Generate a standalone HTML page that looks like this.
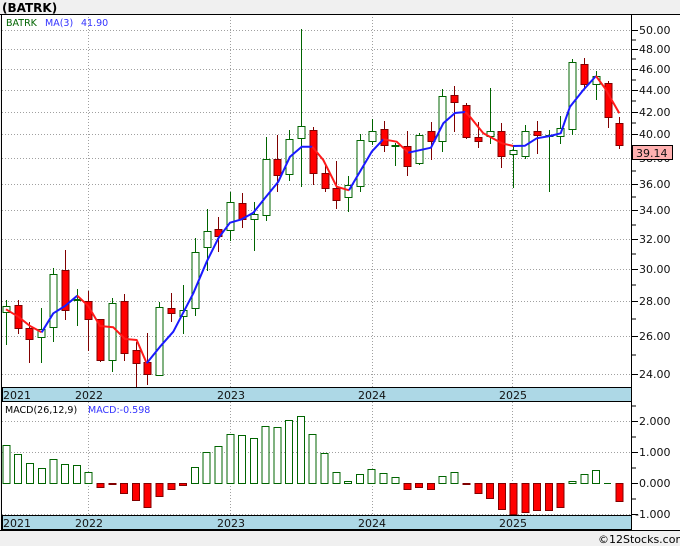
<!DOCTYPE html>
<html><head><meta charset="utf-8"><style>
html,body{margin:0;padding:0;background:#f0f0f0;}
svg{display:block;font-family:"DejaVu Sans","Liberation Sans",sans-serif;}
</style></head><body>
<svg width="680" height="546" viewBox="0 0 680 546" xmlns="http://www.w3.org/2000/svg">
<rect x="0" y="0" width="680" height="546" fill="#f0f0f0"/>
<rect x="2" y="14" width="678" height="516" fill="#fff"/>
<text x="2" y="12" font-size="12" font-weight="bold" fill="#000">(BATRK)</text>
<!-- grid -->
<g stroke="#a0a0a0" stroke-width="1" stroke-dasharray="1,2">
<line x1="2" x2="632" y1="30.5" y2="30.5"/><line x1="2" x2="632" y1="49.5" y2="49.5"/>
<line x1="2" x2="632" y1="69.5" y2="69.5"/><line x1="2" x2="632" y1="90.5" y2="90.5"/>
<line x1="2" x2="632" y1="112.5" y2="112.5"/><line x1="2" x2="632" y1="134.5" y2="134.5"/>
<line x1="2" x2="632" y1="158.5" y2="158.5"/><line x1="2" x2="632" y1="184.5" y2="184.5"/>
<line x1="2" x2="632" y1="210.5" y2="210.5"/><line x1="2" x2="632" y1="239.5" y2="239.5"/>
<line x1="2" x2="632" y1="269.5" y2="269.5"/><line x1="2" x2="632" y1="301.5" y2="301.5"/>
<line x1="2" x2="632" y1="336.5" y2="336.5"/><line x1="2" x2="632" y1="374.5" y2="374.5"/>
<line x1="88.5" x2="88.5" y1="14" y2="387"/><line x1="230.5" x2="230.5" y1="14" y2="387"/>
<line x1="372.5" x2="372.5" y1="14" y2="387"/><line x1="512.5" x2="512.5" y1="14" y2="387"/>
<line x1="2" x2="632" y1="421.5" y2="421.5"/><line x1="2" x2="632" y1="452.5" y2="452.5"/>
<line x1="2" x2="632" y1="514.5" y2="514.5"/>
<line x1="88.5" x2="88.5" y1="402" y2="515"/><line x1="230.5" x2="230.5" y1="402" y2="515"/>
<line x1="372.5" x2="372.5" y1="402" y2="515"/><line x1="512.5" x2="512.5" y1="402" y2="515"/>
</g>
<!-- right axis ticks -->
<g stroke="#000" stroke-width="1">
<line x1="632" x2="638" y1="30.5" y2="30.5"/><line x1="632" x2="638" y1="49.5" y2="49.5"/>
<line x1="632" x2="638" y1="69.5" y2="69.5"/><line x1="632" x2="638" y1="90.5" y2="90.5"/>
<line x1="632" x2="638" y1="112.5" y2="112.5"/><line x1="632" x2="638" y1="134.5" y2="134.5"/>
<line x1="632" x2="638" y1="158.5" y2="158.5"/><line x1="632" x2="638" y1="184.5" y2="184.5"/>
<line x1="632" x2="638" y1="210.5" y2="210.5"/><line x1="632" x2="638" y1="239.5" y2="239.5"/>
<line x1="632" x2="638" y1="269.5" y2="269.5"/><line x1="632" x2="638" y1="301.5" y2="301.5"/>
<line x1="632" x2="638" y1="336.5" y2="336.5"/><line x1="632" x2="638" y1="374.5" y2="374.5"/>
<line x1="632" x2="636" y1="40" y2="40"/><line x1="632" x2="636" y1="59" y2="59"/>
<line x1="632" x2="636" y1="80" y2="80"/><line x1="632" x2="636" y1="101" y2="101"/>
<line x1="632" x2="636" y1="123" y2="123"/><line x1="632" x2="636" y1="146" y2="146"/>
<line x1="632" x2="636" y1="171" y2="171"/><line x1="632" x2="636" y1="197" y2="197"/>
<line x1="632" x2="636" y1="225" y2="225"/><line x1="632" x2="636" y1="254" y2="254"/>
<line x1="632" x2="636" y1="285" y2="285"/><line x1="632" x2="636" y1="319" y2="319"/>
<line x1="632" x2="636" y1="355" y2="355"/>
<line x1="632" x2="638" y1="421.5" y2="421.5"/><line x1="632" x2="638" y1="452.5" y2="452.5"/>
<line x1="632" x2="638" y1="483.5" y2="483.5"/><line x1="632" x2="638" y1="514.5" y2="514.5"/>
<line x1="632" x2="636" y1="406" y2="406"/><line x1="632" x2="636" y1="437" y2="437"/>
<line x1="632" x2="636" y1="468" y2="468"/><line x1="632" x2="636" y1="499" y2="499"/>
</g>
<g font-size="11" fill="#111">
<text x="639" y="34">50.00</text><text x="639" y="53">48.00</text>
<text x="639" y="73">46.00</text><text x="639" y="94">44.00</text>
<text x="639" y="116">42.00</text><text x="639" y="138">40.00</text>
<text x="639" y="162">38.00</text><text x="639" y="188">36.00</text>
<text x="639" y="214">34.00</text><text x="639" y="243">32.00</text>
<text x="639" y="273">30.00</text><text x="639" y="305">28.00</text>
<text x="639" y="340">26.00</text><text x="639" y="378">24.00</text>
<text x="639" y="425">2.000</text><text x="639" y="456">1.000</text>
<text x="639" y="487">0.000</text><text x="635" y="518">-1.000</text>
</g>
<rect x="632.5" y="145.5" width="40" height="14" fill="#ffb0b0" stroke="#000"/>
<text x="636" y="157" font-size="11" fill="#111">39.14</text>
<!-- candles -->
<g stroke-width="1">
<g stroke="#006400" fill="#fff">
<line x1="6.5" x2="6.5" y1="300" y2="345"/><rect x="3" y="306.5" width="7" height="6"/>
<line x1="41.5" x2="41.5" y1="308" y2="363"/><rect x="38" y="329.5" width="7" height="8"/>
<line x1="53.5" x2="53.5" y1="268" y2="342"/><rect x="50" y="274.5" width="7" height="53"/>
<line x1="77.5" x2="77.5" y1="289" y2="326"/><rect x="74" y="299.5" width="7" height="1"/>
<line x1="112.5" x2="112.5" y1="298" y2="372"/><rect x="109" y="303.5" width="7" height="57"/>
<line x1="159.5" x2="159.5" y1="302" y2="376"/><rect x="156" y="307.5" width="7" height="68"/>
<line x1="183.5" x2="183.5" y1="285" y2="334"/><rect x="180" y="310.5" width="7" height="6"/>
<line x1="195.5" x2="195.5" y1="238" y2="316"/><rect x="192" y="252.5" width="7" height="56"/>
<line x1="207.5" x2="207.5" y1="209" y2="271"/><rect x="204" y="231.5" width="7" height="16"/>
<line x1="230.5" x2="230.5" y1="192" y2="241"/><rect x="227" y="202.5" width="7" height="28"/>
<line x1="254.5" x2="254.5" y1="202" y2="251"/><rect x="251" y="214.5" width="7" height="5"/>
<line x1="266.5" x2="266.5" y1="137" y2="221"/><rect x="263" y="159.5" width="7" height="56"/>
<line x1="289.5" x2="289.5" y1="130" y2="181"/><rect x="286" y="139.5" width="7" height="35"/>
<line x1="301.5" x2="301.5" y1="29" y2="187"/><rect x="298" y="126.5" width="7" height="12"/>
<line x1="348.5" x2="348.5" y1="176" y2="212"/><rect x="345" y="185.5" width="7" height="12"/>
<line x1="360.5" x2="360.5" y1="134" y2="192"/><rect x="357" y="140.5" width="7" height="46"/>
<line x1="372.5" x2="372.5" y1="119" y2="145"/><rect x="369" y="131.5" width="7" height="10"/>
<line x1="395.5" x2="395.5" y1="143" y2="166"/><rect x="392" y="145.5" width="7" height="1"/>
<line x1="419.5" x2="419.5" y1="133" y2="165"/><rect x="416" y="135.5" width="7" height="28"/>
<line x1="442.5" x2="442.5" y1="89" y2="152"/><rect x="439" y="96.5" width="7" height="45"/>
<line x1="490.5" x2="490.5" y1="88" y2="144"/><rect x="487" y="131.5" width="7" height="5"/>
<line x1="513.5" x2="513.5" y1="145" y2="188"/><rect x="510" y="150.5" width="7" height="4"/>
<line x1="525.5" x2="525.5" y1="125" y2="159"/><rect x="522" y="131.5" width="7" height="25"/>
<line x1="549.5" x2="549.5" y1="130" y2="192"/><rect x="546" y="135.5" width="7" height="1"/>
<line x1="560.5" x2="560.5" y1="116" y2="144"/><rect x="557" y="128.5" width="7" height="8"/>
<line x1="572.5" x2="572.5" y1="59" y2="135"/><rect x="569" y="62.5" width="7" height="67"/>
<line x1="596.5" x2="596.5" y1="71" y2="100"/><rect x="593" y="76.5" width="7" height="8"/>
</g>
<g stroke="#800000" fill="#ff0000">
<line x1="18.5" x2="18.5" y1="300" y2="334"/><rect x="15" y="305.5" width="7" height="23"/>
<line x1="29.5" x2="29.5" y1="322" y2="363"/><rect x="26" y="328.5" width="7" height="11"/>
<line x1="65.5" x2="65.5" y1="250" y2="320"/><rect x="62" y="270.5" width="7" height="40"/>
<line x1="88.5" x2="88.5" y1="291" y2="351"/><rect x="85" y="301.5" width="7" height="18"/>
<line x1="100.5" x2="100.5" y1="319" y2="362"/><rect x="97" y="319.5" width="7" height="41"/>
<line x1="124.5" x2="124.5" y1="294" y2="361"/><rect x="121" y="301.5" width="7" height="52"/>
<line x1="136.5" x2="136.5" y1="342" y2="387"/><rect x="133" y="350.5" width="7" height="13"/>
<line x1="147.5" x2="147.5" y1="333" y2="385"/><rect x="144" y="362.5" width="7" height="12"/>
<line x1="171.5" x2="171.5" y1="293" y2="322"/><rect x="168" y="308.5" width="7" height="5"/>
<line x1="218.5" x2="218.5" y1="217" y2="252"/><rect x="215" y="229.5" width="7" height="7"/>
<line x1="242.5" x2="242.5" y1="193" y2="228"/><rect x="239" y="203.5" width="7" height="16"/>
<line x1="277.5" x2="277.5" y1="135" y2="192"/><rect x="274" y="159.5" width="7" height="16"/>
<line x1="313.5" x2="313.5" y1="127" y2="185"/><rect x="310" y="130.5" width="7" height="43"/>
<line x1="325.5" x2="325.5" y1="165" y2="192"/><rect x="322" y="173.5" width="7" height="15"/>
<line x1="336.5" x2="336.5" y1="161" y2="209"/><rect x="333" y="188.5" width="7" height="12"/>
<line x1="384.5" x2="384.5" y1="121" y2="152"/><rect x="381" y="129.5" width="7" height="16"/>
<line x1="407.5" x2="407.5" y1="131" y2="176"/><rect x="404" y="146.5" width="7" height="20"/>
<line x1="431.5" x2="431.5" y1="122" y2="160"/><rect x="428" y="131.5" width="7" height="10"/>
<line x1="454.5" x2="454.5" y1="86" y2="132"/><rect x="451" y="95.5" width="7" height="7"/>
<line x1="466.5" x2="466.5" y1="103" y2="139"/><rect x="463" y="105.5" width="7" height="32"/>
<line x1="478.5" x2="478.5" y1="122" y2="148"/><rect x="475" y="137.5" width="7" height="4"/>
<line x1="501.5" x2="501.5" y1="123" y2="168"/><rect x="498" y="131.5" width="7" height="25"/>
<line x1="537.5" x2="537.5" y1="121" y2="154"/><rect x="534" y="131.5" width="7" height="4"/>
<line x1="584.5" x2="584.5" y1="58" y2="88"/><rect x="581" y="64.5" width="7" height="20"/>
<line x1="608.5" x2="608.5" y1="81" y2="128"/><rect x="605" y="83.5" width="7" height="34"/>
<line x1="619.5" x2="619.5" y1="117" y2="149"/><rect x="616" y="123.5" width="7" height="22"/>
</g>
</g>
<!-- MA line -->
<g fill="none" stroke-width="2" stroke-linejoin="round">
<polyline stroke="#ff1a1a" points="6,309.3 18.3,316.7 30,326 41.7,332.3"/>
<polyline stroke="#1a1aff" points="41.7,332.3 53.3,313.3 65,306 77.3,295.7"/>
<polyline stroke="#ff1a1a" points="77.3,295.7 88.3,306 100,326 113.3,327.3 125,339 136.7,340 146.7,363.3"/>
<polyline stroke="#1a1aff" points="146.7,363.3 160,346.7 173.3,331.7 193.3,293.3 206.7,261.7 218.3,238.3 230,222.7 241.7,219.3 253.3,212.7 265,198 278.3,181.7 290,156.7 301.7,146.7 312.3,146.7"/>
<polyline stroke="#ff1a1a" points="312.3,146.7 323.3,160 336.7,186.7 349,190.3"/>
<polyline stroke="#1a1aff" points="349,190.3 371.7,151.7 383.3,139.3"/>
<polyline stroke="#ff1a1a" points="383.3,139.3 396.7,141.7 408.3,152.7"/>
<polyline stroke="#1a1aff" points="408.3,152.7 431,147.7 443.3,123.3 455,113 465.3,112"/>
<polyline stroke="#ff1a1a" points="465.3,112 471,118 483.3,133.3 502,143.3 513.3,146"/>
<polyline stroke="#1a1aff" points="513.3,146 525,145.7 536.7,138.3 550,136 560.7,133.3 570,106.7 583.3,90 596,76"/>
<polyline stroke="#ff1a1a" points="596,76 605,88.3 619.3,113.3"/>
</g>
<text x="6" y="26" font-size="9.5" fill="#006400">BATRK</text>
<text x="45" y="26" font-size="9.5" fill="#3333ff">MA(3)</text>
<text x="81" y="26" font-size="9.5" fill="#3333ff">41.90</text>
<!-- MACD bars -->
<g stroke="#006400" fill="#fff">
<rect x="3" y="445.5" width="7" height="38"/><rect x="14.5" y="454.5" width="7" height="29"/>
<rect x="26.5" y="463.5" width="7" height="20"/><rect x="38.5" y="468.5" width="7" height="15"/>
<rect x="50" y="459.5" width="7" height="24"/><rect x="61.5" y="464.5" width="7" height="19"/>
<rect x="73.5" y="465.5" width="7" height="18"/><rect x="85" y="472.5" width="7" height="11"/>
<rect x="191.5" y="467.5" width="7" height="16"/><rect x="203" y="452.5" width="7" height="31"/>
<rect x="215" y="446.5" width="7" height="37"/><rect x="227" y="434.5" width="7" height="49"/>
<rect x="238.5" y="435.5" width="7" height="48"/><rect x="250.5" y="438.5" width="7" height="45"/>
<rect x="262" y="426.5" width="7" height="57"/><rect x="274" y="427.5" width="7" height="56"/>
<rect x="285.5" y="420.5" width="7" height="63"/><rect x="297.5" y="416.5" width="7" height="67"/>
<rect x="309" y="434.5" width="7" height="49"/><rect x="321" y="453.5" width="7" height="30"/>
<rect x="333" y="472.5" width="7" height="11"/><rect x="344.5" y="481.5" width="7" height="2"/>
<rect x="356.5" y="474.5" width="7" height="9"/><rect x="368" y="469.5" width="7" height="14"/>
<rect x="380" y="473.5" width="7" height="10"/><rect x="392" y="477.5" width="7" height="6"/>
<rect x="439" y="476.5" width="7" height="7"/><rect x="451" y="472.5" width="7" height="11"/>
<rect x="569" y="481.5" width="7" height="2"/><rect x="581" y="474.5" width="7" height="9"/>
<rect x="592.5" y="470.5" width="7" height="13"/>
</g>
<line x1="604" x2="611" y1="483.5" y2="483.5" stroke="#006400"/>
<g stroke="#800000" fill="#ff0000">
<rect x="97" y="483.5" width="7" height="4"/><rect x="109" y="483.5" width="7" height="1"/>
<rect x="120.5" y="483.5" width="7" height="10"/><rect x="132.5" y="483.5" width="7" height="17"/>
<rect x="144" y="483.5" width="7" height="24"/><rect x="156" y="483.5" width="7" height="13"/>
<rect x="168" y="483.5" width="7" height="6"/><rect x="179.5" y="483.5" width="7" height="2"/>
<rect x="404" y="483.5" width="7" height="6"/><rect x="415.5" y="483.5" width="7" height="4"/>
<rect x="427.5" y="483.5" width="7" height="6"/><rect x="463" y="483.5" width="7" height="1"/>
<rect x="475" y="483.5" width="7" height="10"/><rect x="486.5" y="483.5" width="7" height="15"/>
<rect x="498.5" y="483.5" width="7" height="26"/><rect x="510" y="483.5" width="7" height="31"/>
<rect x="522" y="483.5" width="7" height="29"/><rect x="533.5" y="483.5" width="7" height="27"/>
<rect x="545.5" y="483.5" width="7" height="27"/><rect x="557" y="483.5" width="7" height="24"/>
<rect x="616" y="483.5" width="7" height="18"/>
</g>
<text x="5" y="413" font-size="9.5" fill="#000">MACD(26,12,9)</text>
<text x="88" y="413" font-size="9.5" fill="#3333ff">MACD:-0.598</text>
<!-- date strips -->
<rect x="2.5" y="387.5" width="629" height="14" fill="#add8e6" stroke="#000"/>
<rect x="2.5" y="515.5" width="629" height="14" fill="#add8e6" stroke="#000"/>
<g font-size="11" fill="#111">
<text x="3" y="399">2021</text><text x="75" y="399">2022</text><text x="217" y="399">2023</text><text x="358" y="399">2024</text><text x="499" y="399">2025</text>
<text x="3" y="527">2021</text><text x="75" y="527">2022</text><text x="217" y="527">2023</text><text x="358" y="527">2024</text><text x="499" y="527">2025</text>
</g>
<!-- frame -->
<g stroke="#000" fill="none">
<line x1="0" x2="680" y1="14.5" y2="14.5"/>
<line x1="1.5" x2="1.5" y1="14" y2="530"/>
<line x1="631.5" x2="631.5" y1="14" y2="530"/>
<line x1="0" x2="680" y1="530.5" y2="530.5"/>
</g>
<text x="598" y="543" font-size="11" fill="#000">©12Stocks.com</text>
</svg>
</body></html>
